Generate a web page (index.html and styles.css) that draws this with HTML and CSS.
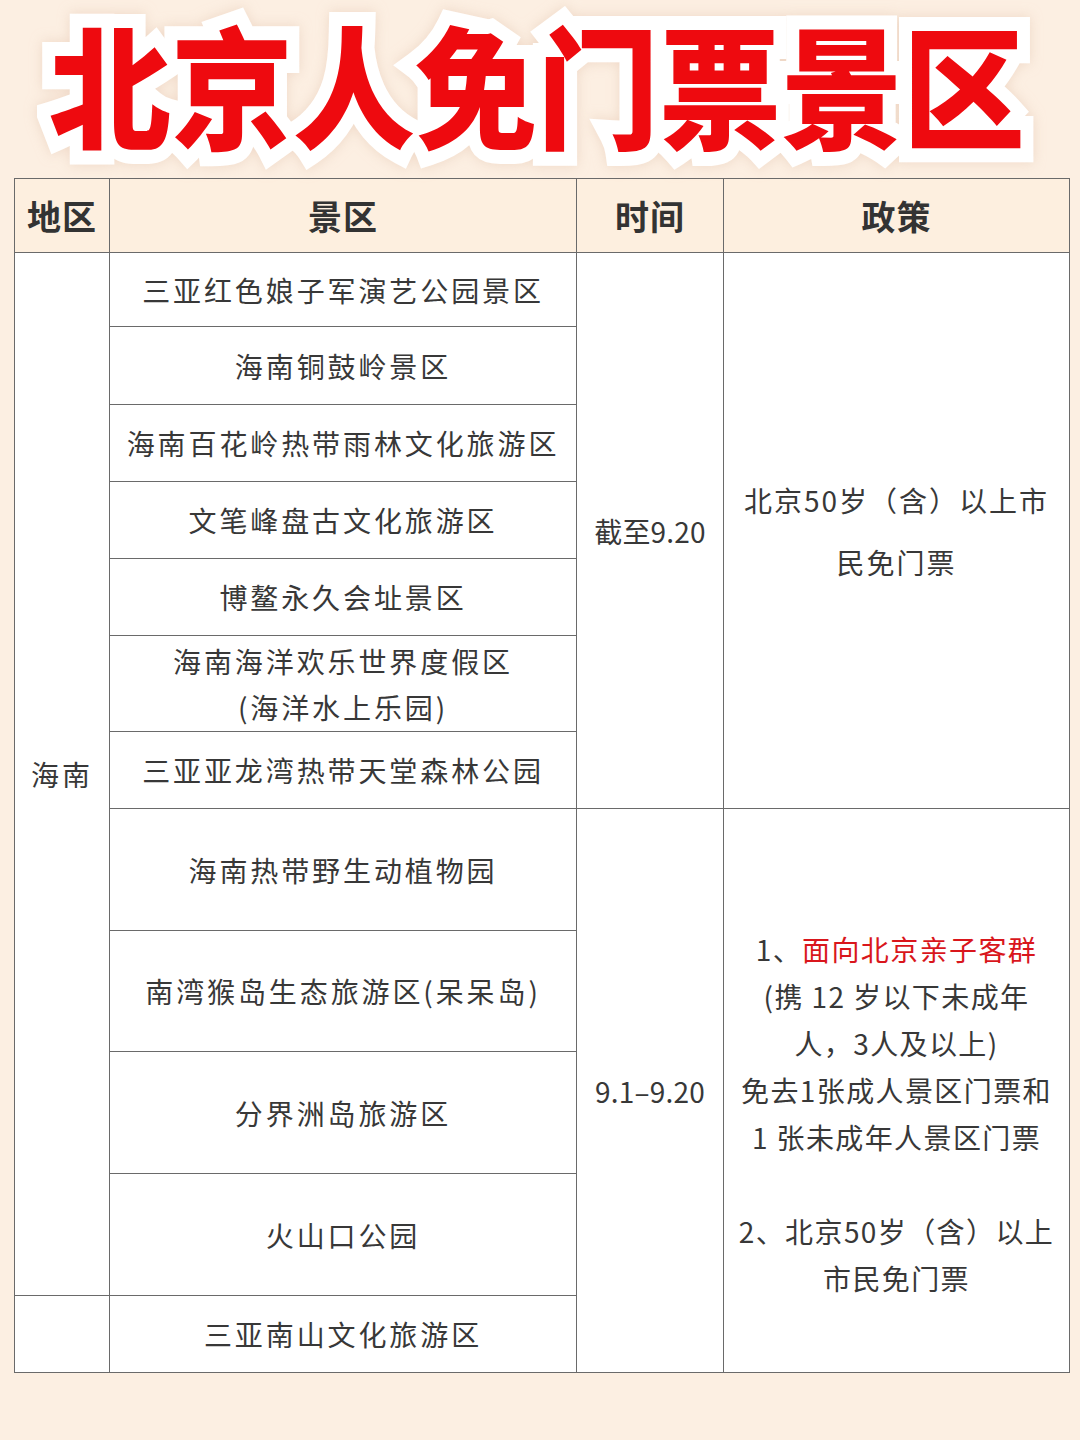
FILE: index.html
```html
<!DOCTYPE html>
<html lang="zh-CN">
<head>
<meta charset="utf-8">
<title>北京人免门票景区</title>
<link rel="stylesheet" href="styles.css">
</head>
<body>
<div class="page">
  <header class="title-wrap">
    <h1 class="title">北京人免门票景区</h1>
  </header>
  <table class="grid">
    <colgroup>
      <col class="c-region">
      <col class="c-spot">
      <col class="c-time">
      <col class="c-policy">
    </colgroup>
    <thead>
      <tr class="head">
        <th>地区</th>
        <th>景区</th>
        <th>时间</th>
        <th>政策</th>
      </tr>
    </thead>
    <tbody>
      <tr class="r74">
        <td rowspan="11" class="region">海南</td>
        <td>三亚红色娘子军演艺公园景区</td>
        <td rowspan="7" class="time">截至9.20</td>
        <td rowspan="7" class="policy p1">北京50岁（含）以上市<br>民免门票</td>
      </tr>
      <tr class="r78"><td>海南铜鼓岭景区</td></tr>
      <tr class="r77"><td>海南百花岭热带雨林文化旅游区</td></tr>
      <tr class="r77"><td>文笔峰盘古文化旅游区</td></tr>
      <tr class="r77"><td>博鳌永久会址景区</td></tr>
      <tr class="r96"><td class="two">海南海洋欢乐世界度假区<br>(海洋水上乐园)</td></tr>
      <tr class="r77"><td>三亚亚龙湾热带天堂森林公园</td></tr>
      <tr class="r122">
        <td>海南热带野生动植物园</td>
        <td rowspan="5" class="time">9.1–9.20</td>
        <td rowspan="5" class="policy p2">1、<span class="red">面向北京亲子客群</span><br>(携 12 岁以下未成年<br>人，3人及以上)<br>免去1张成人景区门票和<br>1 张未成年人景区门票<br><br>2、北京50岁（含）以上<br>市民免门票</td>
      </tr>
      <tr class="r121"><td>南湾猴岛生态旅游区(呆呆岛)</td></tr>
      <tr class="r122"><td>分界洲岛旅游区</td></tr>
      <tr class="r122"><td>火山口公园</td></tr>
      <tr class="r77">
        <td class="region"></td>
        <td>三亚南山文化旅游区</td>
      </tr>
    </tbody>
  </table>
</div>
</body>
</html>
```

FILE: styles.css
```css
html, body {
  margin: 0;
  padding: 0;
}

body {
  background: #fcefe2;
  font-family: "Noto Sans CJK SC", "Noto Sans", sans-serif;
  color: #333333;
}

.page {
  width: 1080px;
  height: 1440px;
  overflow: hidden;
}

.title-wrap {
  height: 178px;
  display: flex;
  justify-content: center;
  align-items: flex-start;
}

.title {
  margin: 0;
  padding: 0 0 0 0;
  font-size: 122px;
  line-height: 178px;
  font-weight: 900;
  letter-spacing: 0;
  color: #ee0a0f;
  -webkit-text-stroke: 26px #ffffff;
  paint-order: stroke fill;
  white-space: nowrap;
  transform: translate(-3px, -7px) scaleY(1.08);
  filter: drop-shadow(0 0 6px rgba(230, 200, 180, 0.6));
}

.grid {
  margin-left: 14px;
  width: 1055px;
  border-collapse: collapse;
  table-layout: fixed;
  background: #ffffff;
}

.c-region { width: 95px; }
.c-spot { width: 467px; }
.c-time { width: 147px; }
.c-policy { width: 346px; }

.grid th,
.grid td {
  border: 1.5px solid #6a6a6a;
  text-align: center;
  vertical-align: middle;
  padding: 0;
  white-space: nowrap;
}

.head {
  height: 74px;
  background: #fdefdf;
}

.head th {
  font-size: 34px;
  font-weight: 700;
  color: #333333;
  letter-spacing: 1px;
}

.grid td {
  font-size: 28px;
  font-weight: 400;
  letter-spacing: 2.9px;
  color: #383838;
}

.r74 { height: 74px; }
.r77 { height: 77px; }
.r78 { height: 78px; }
.r96 { height: 96px; }
.r121 { height: 121px; }
.r122 { height: 122px; }

.two {
  line-height: 46px;
}

.region {
  letter-spacing: 1px;
}

.grid td.time {
  letter-spacing: 0.2px;
}

.grid td.policy {
  letter-spacing: 2px;
}

.p1 {
  line-height: 62px;
  padding-bottom: 4px;
}

.grid td.p2 {
  line-height: 47px;
  padding-top: 46px;
  letter-spacing: 1.4px;
}

.red {
  color: #d9161c;
}
```
